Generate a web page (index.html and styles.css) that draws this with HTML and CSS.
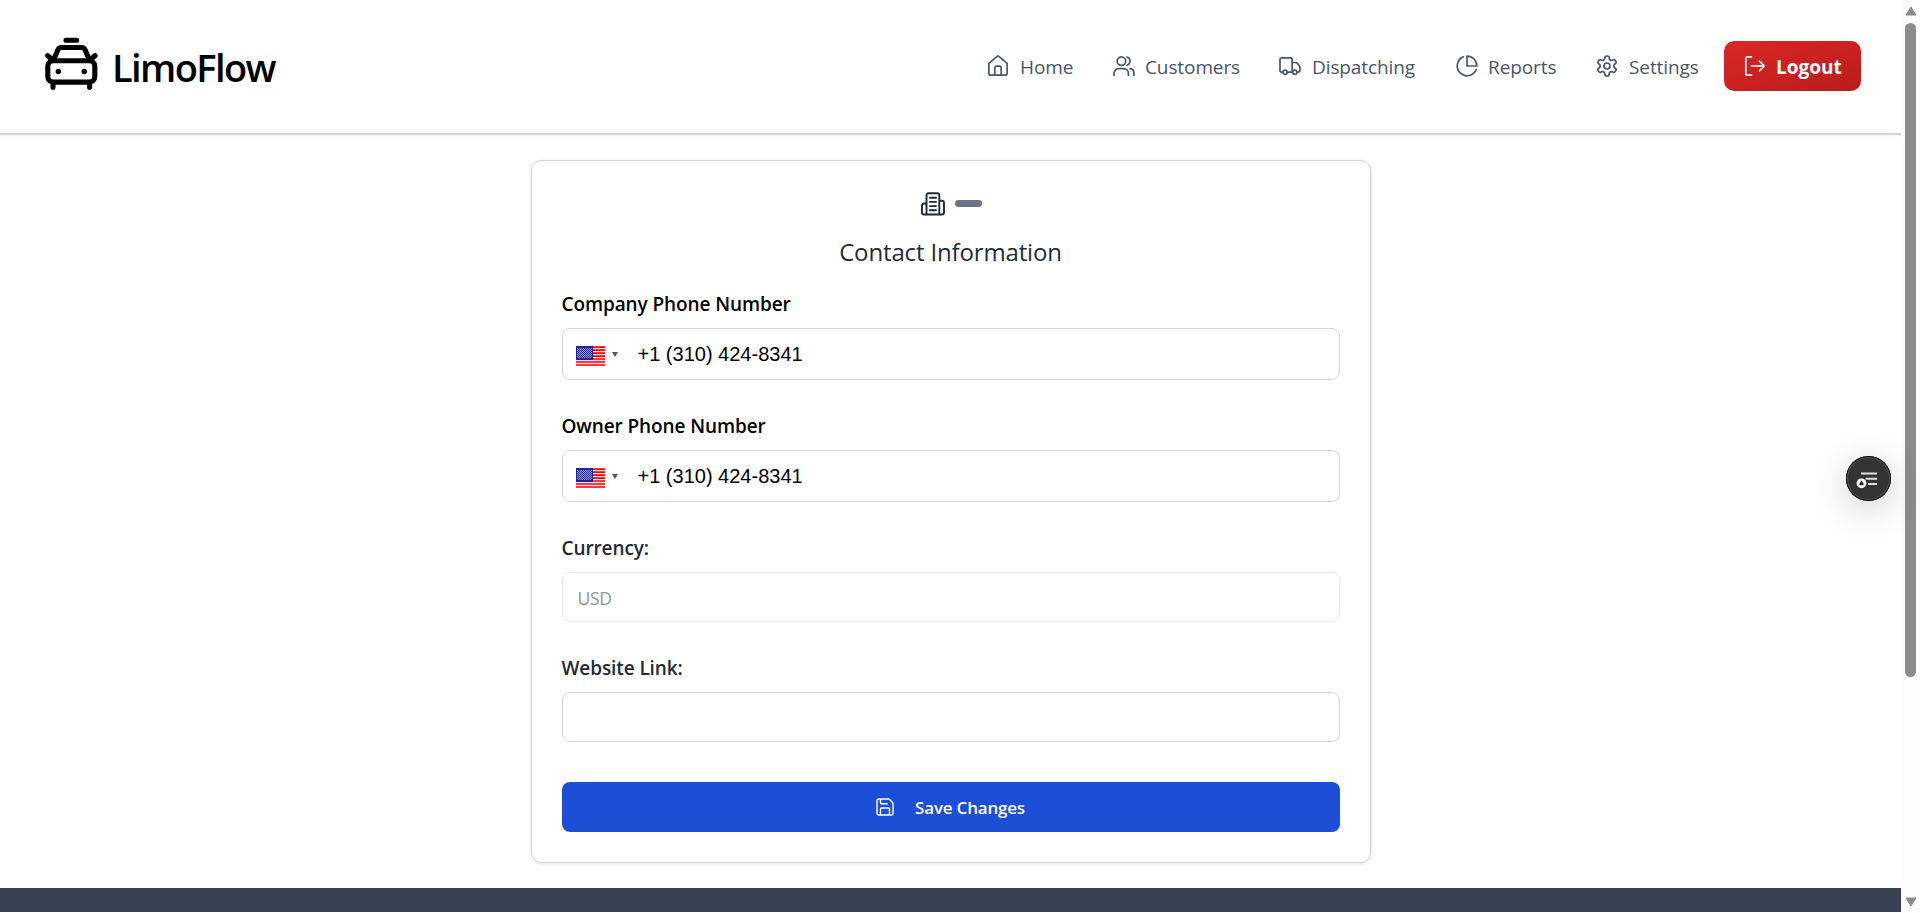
FILE: index.html
```html
<!DOCTYPE html>
<html lang="en">
<head>
<meta charset="utf-8">
<title>LimoFlow</title>
<link rel="stylesheet" href="styles.css">
</head>
<body>
<div class="page">
  <header class="header">
    <a class="brand">
      <svg class="brand-icon" viewBox="45 37 53 53" fill="none" stroke="#000" stroke-width="5.1" stroke-linecap="round" stroke-linejoin="round">
        <path d="M66 40.3h10.6"/>
        <path d="M53.6 60l4.2-10c.9-2.1 1.8-2.5 3.4-2.5h20.6c1.6 0 2.5.4 3.4 2.5l4.2 10"/>
        <rect x="47.8" y="60.8" width="47" height="21.3" rx="5.5"/>
        <path d="M47.7 55.7l3.6 3M95 55.7l-3.6 3M53 83v4.2M89.6 83v4.2"/>
        <g fill="#000" stroke="none"><circle cx="58.3" cy="71.5" r="2.7"/><circle cx="84.3" cy="71.5" r="2.7"/></g>
      </svg>
      <span class="brand-name">LimoFlow</span>
    </a>
    <nav class="nav">
      <a class="nav-item nav-home">
        <svg class="icon" viewBox="0 0 22 22"><path d="M1.9 8.3 10.2 1.3a1.2 1.2 0 0 1 1.6 0L20.1 8.3V18.2a2 2 0 0 1-2 2H3.9a2 2 0 0 1-2-2ZM7.8 20v-6.8a2 2 0 0 1 2-2h2.4a2 2 0 0 1 2 2V20"/></svg>
        <span>Home</span>
      </a>
      <a class="nav-item nav-customers">
        <svg class="icon" viewBox="0 0 22 22"><circle cx="8.4" cy="6.1" r="4.3"/><path d="M1 20.3v-2a4.6 4.6 0 0 1 4.600-4.600h5.200a4.600 4.600 0 0 1 4.600 4.600v2M14 2a4.300 4.300 0 0 1 0 8.200M17 13.700a4.600 4.600 0 0 1 3.900 4.600v2"/></svg>
        <span>Customers</span>
      </a>
      <a class="nav-item nav-dispatching">
        <svg class="icon" viewBox="0 0 22 22"><path d="M4 17.200H2.600A1.600 1.600 0 0 1 1 15.600V4.400a1.600 1.600 0 0 1 1.600-1.600h8.900a1.600 1.600 0 0 1 1.600 1.600v12.800M8.200 17.200h5.300M13.100 7.500h3.100a3 3 0 0 1 2.100.900l1.700 1.900a3.500 3.500 0 0 1 .9 2.300v3a1.600 1.600 0 0 1-1.600 1.600h-1.200"/><circle cx="6.100" cy="17.200" r="2.100"/><circle cx="15.800" cy="17.200" r="2.100"/></svg>
        <span>Dispatching</span>
      </a>
      <a class="nav-item nav-reports">
        <svg class="icon" viewBox="0 0 22 22"><path d="M20.200 14.500A9.800 9.800 0 1 1 7.300 1.900"/><path d="M20.900 11a9.900 9.900 0 0 0-9.900-9.900V11Z"/></svg>
        <span>Reports</span>
      </a>
      <a class="nav-item nav-settings">
        <svg class="icon" viewBox="1 1 22 22"><path d="M12.22 2h-.44a2 2 0 0 0-2 2v.18a2 2 0 0 1-1 1.73l-.43.25a2 2 0 0 1-2 0l-.15-.08a2 2 0 0 0-2.73.73l-.22.38a2 2 0 0 0 .73 2.73l.15.1a2 2 0 0 1 1 1.72v.51a2 2 0 0 1-1 1.74l-.15.09a2 2 0 0 0-.73 2.73l.22.38a2 2 0 0 0 2.73.73l.15-.08a2 2 0 0 1 2 0l.43.25a2 2 0 0 1 1 1.73V20a2 2 0 0 0 2 2h.44a2 2 0 0 0 2-2v-.18a2 2 0 0 1 1-1.73l.43-.25a2 2 0 0 1 2 0l.15.08a2 2 0 0 0 2.73-.73l.22-.39a2 2 0 0 0-.73-2.73l-.15-.08a2 2 0 0 1-1-1.74v-.5a2 2 0 0 1 1-1.74l.15-.09a2 2 0 0 0 .73-2.73l-.22-.38a2 2 0 0 0-2.73-.73l-.15.08a2 2 0 0 1-2 0l-.43-.25a2 2 0 0 1-1-1.73V4a2 2 0 0 0-2-2z"/><circle cx="12" cy="12" r="3"/></svg>
        <span>Settings</span>
      </a>
      <button class="logout">
        <svg class="icon" viewBox="0 0 22 22"><path d="M7.5 1.800H3.600A1.800 1.800 0 0 0 1.800 3.600v14.800a1.800 1.800 0 0 0 1.800 1.800h3.900M7.500 11h12.700M15.400 6.100 20.300 11l-4.900 4.900"/></svg>
        <span>Logout</span>
      </button>
    </nav>
  </header>

  <main class="main">
    <section class="card">
      <div class="steps">
        <svg class="building" viewBox="0 0 24 24"><path d="M5.500 22.500V3.200a2 2 0 0 1 2-2h8.800a2 2 0 0 1 2 2v19.300M5.500 11.500H3a2 2 0 0 0-2 2v7a2 2 0 0 0 2 2h18a2 2 0 0 0 2-2V10.700a2 2 0 0 0-2-2h-2.700M9 5.700h6M9 9.900h6M9 14.100h6M9 18.300h6"/></svg>
        <span class="step-bar"></span>
      </div>
      <h1 class="title">Contact Information</h1>

      <label class="label label-strong">Company Phone Number</label>
      <div class="field phone">
        <svg class="flag"><use href="#flag-us"/></svg>
        <span class="caret"></span>
        <span>+1 (310) 424-8341</span>
      </div>

      <label class="label label-strong">Owner Phone Number</label>
      <div class="field phone">
        <svg class="flag"><use href="#flag-us"/></svg>
        <span class="caret"></span>
        <span>+1 (310) 424-8341</span>
      </div>

      <label class="label">Currency:</label>
      <div class="field field-disabled">USD</div>

      <label class="label">Website Link:</label>
      <div class="field"></div>

      <button class="save">
        <svg class="save-icon" viewBox="0 0 18 18"><path d="M2.800 1h9.500a2 2 0 0 1 1.300.5l2.900 2.900a2 2 0 0 1 .5 1.300v9.500a1.800 1.800 0 0 1-1.800 1.800H2.800A1.800 1.800 0 0 1 1 15.200V2.800A1.800 1.800 0 0 1 2.800 1ZM4.500 1v3.700a1 1 0 0 0 1 1h6.200M4.500 17v-6a1 1 0 0 1 1-1h7a1 1 0 0 1 1 1v6"/></svg>
        <span>Save Changes</span>
      </button>
    </section>
  </main>
  <footer class="footer"></footer>
</div>

<div class="scrollbar">
  <svg class="arrow" viewBox="0 0 12 10"><path d="M6 1 11 9H1Z"/></svg>
  <div class="thumb"></div>
  <svg class="arrow arrow-down" viewBox="0 0 12 10"><path d="M6 9 11 1H1Z"/></svg>
</div>

<button class="fab">
  <svg viewBox="0 0 45 45">
    <path d="M15 17.500h16M19.500 22.700H31M22 28.100h9" stroke="#e0e0e0" stroke-width="2"/>
    <circle cx="15.500" cy="27.300" r="4.900" fill="#fff"/>
    <path d="M15.500 24.200l2.300 3.700-.6 1.400h-3.400l-.6-1.400z" fill="#2b2b2b"/>
  </svg>
</button>

<svg class="defs">
  <symbol id="flag-us" viewBox="0 0 29 20">
    <path fill="#ffe3e3" d="M0 0h29v20H0z"/>
    <path stroke="#f00" stroke-width="1.700" d="M0 1.100h29M0 4.100h29M0 7.100h29M0 10.100h29M0 13h29M0 16h29M0 19h29"/>
    <path fill="#22229c" d="M0 0h17v14H0z"/>
    <path stroke="#9c9ce0" stroke-width="1" stroke-dasharray="1 1" d="M1 2.500h15M2 3.500h14M1 4.500h15M2 5.500h14M1 6.500h15M2 7.500h14M1 8.500h15M2 9.500h14M1 10.500h15M2 11.500h14"/>
  </symbol>
</svg>
</body>
</html>
```
FILE: styles.css
```css
* { box-sizing: border-box; }

body {
  margin: 0;
  height: 913px;
  overflow: hidden;
  display: grid;
  grid-template-columns: 1fr 19px;
  background: #fff;
  color: #1f2937;
  font-family: "Open Sans", "Noto Sans", sans-serif;
}

button {
  border: 0;
  font-family: inherit;
}

.page {
  display: flex;
  flex-direction: column;
}

/* Header */
.header {
  display: flex;
  align-items: center;
  justify-content: space-between;
  height: 135px;
  padding: 0 40px 0 45px;
  border-bottom: 2px solid #d1d5db;
  box-shadow: 0 1px 2px rgba(0, 0, 0, .05);
}

.brand {
  display: flex;
  align-items: center;
  gap: 14px;
  color: #000;
}

.brand-icon {
  width: 53px;
  height: 53px;
  margin-bottom: 6px;
}

.brand-name {
  font-size: 38px;
  font-weight: 600;
  line-height: 48px;
  letter-spacing: -1.6px;
  padding-top: 1px;
}

.nav {
  display: flex;
  align-items: center;
  color: #4b5563;
  font-size: 19px;
  line-height: 28px;
  letter-spacing: -.1px;
}

.nav-item {
  display: flex;
  align-items: center;
  gap: 10px;
}

.nav-home { width: 126px; }
.nav-customers { width: 166px; }
.nav-dispatching { width: 177px; }
.nav-reports { width: 140px; }
.nav-settings { width: 128px; }

.nav-home,
.nav-dispatching,
.nav-settings { gap: 11px; }

.icon {
  width: 22px;
  height: 22px;
  margin-bottom: 2px;
  fill: none;
  stroke: currentColor;
  stroke-width: 1.7;
  stroke-linecap: round;
  stroke-linejoin: round;
}

.logout {
  display: flex;
  align-items: center;
  gap: 10px;
  width: 137px;
  height: 50px;
  margin-bottom: 1px;
  padding: 1px 0 0 20px;
  border-radius: 10px;
  background: linear-gradient(to bottom right, #dc2626, #b91c1c);
  color: #fff;
  font-size: 19px;
  font-weight: 700;
}

/* Settings card */
.main {
  flex: 1;
  padding-top: 25px;
}

.card {
  display: flex;
  flex-direction: column;
  width: 840px;
  height: 703px;
  margin: 0 auto;
  padding: 30px;
  border: 1px solid #d1d5db;
  border-radius: 10px;
  box-shadow: 0 1px 4px rgba(0, 0, 0, .12);
}

.steps {
  display: flex;
  align-items: center;
  justify-content: center;
  gap: 10px;
  height: 25px;
  padding-left: 2px;
}

.building {
  width: 24px;
  height: 24px;
  fill: none;
  stroke: #1f2937;
  stroke-width: 1.9;
  stroke-linecap: round;
  stroke-linejoin: round;
}

.step-bar {
  width: 27px;
  height: 7px;
  border-radius: 4px;
  background: #6b7280;
}

.title {
  margin: 20px 0 22px;
  font-size: 24px;
  font-weight: 400;
  line-height: 32px;
  letter-spacing: -.15px;
  text-align: center;
}

.label {
  margin-bottom: 10px;
  font-size: 19px;
  font-weight: 600;
  line-height: 28px;
  letter-spacing: -.1px;
}

.label-strong { color: #000; }

.field {
  display: flex;
  align-items: center;
  height: 50px;
  margin-bottom: 32px;
  padding: 2px 15px 0;
  border: 1px solid #d1d5db;
  border-radius: 8px;
  font-size: 17.5px;
}

.field-disabled {
  border-color: #e8eaed;
  color: #929292;
  letter-spacing: -.3px;
}

.phone {
  height: 52px;
  padding: 0 13px;
  color: #000;
  font: 20px "Liberation Sans", Arial, sans-serif;
}

.flag {
  width: 29px;
  height: 20px;
  margin-top: 3px;
}

.caret {
  margin: 0 20px 0 7px;
  border: 3.5px solid transparent;
  border-top: 5px solid #555;
  border-bottom: 0;
}

.save {
  display: flex;
  align-items: center;
  justify-content: center;
  gap: 21px;
  height: 50px;
  margin-top: 8px;
  border-radius: 8px;
  background: #1d4ed8;
  color: #fff;
  font-size: 17px;
  font-weight: 600;
  letter-spacing: -.2px;
}

.save span { padding-top: 1px; }

.save-icon {
  width: 18px;
  height: 18px;
  fill: none;
  stroke: currentColor;
  stroke-width: 1.4;
  stroke-linejoin: round;
}

.footer {
  height: 24px;
  margin-bottom: 1px;
  background: #374151;
}

/* Scrollbar */
.scrollbar {
  display: flex;
  flex-direction: column;
  align-items: center;
  padding: 6px 0 6px;
  background: #fcfcfc;
}

.arrow {
  width: 12px;
  height: 10px;
  fill: #8b8b8b;
  stroke: #8b8b8b;
  stroke-linejoin: round;
}

.arrow-down { margin-top: auto; }

.thumb {
  width: 11px;
  height: 654px;
  margin-top: 7px;
  border-radius: 6px;
  background: #8b8b8b;
}

/* Floating page menu */
.fab {
  position: fixed;
  top: 456px;
  right: 29px;
  width: 45px;
  height: 45px;
  padding: 0;
  border-radius: 50%;
  background: #333;
  box-shadow: inset 0 0 0 1px #111, inset 0 0 0 2px #555, 0 8px 36px rgba(0, 0, 0, .2);
}

.fab svg {
  display: block;
  fill: none;
}

.defs { display: none; }
```
